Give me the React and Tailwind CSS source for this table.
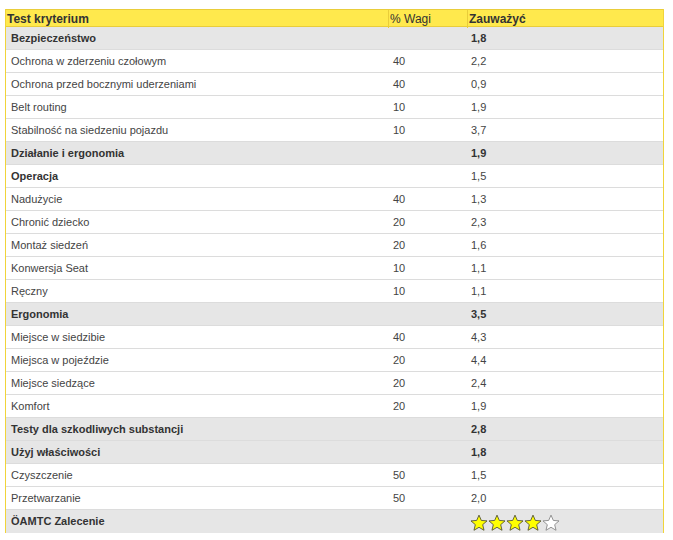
import React from "react";

const rows = [
  { name: "Bezpieczeństwo", weight: "", score: "1,8", type: "group" },
  { name: "Ochrona w zderzeniu czołowym", weight: "40", score: "2,2" },
  { name: "Ochrona przed bocznymi uderzeniami", weight: "40", score: "0,9" },
  { name: "Belt routing", weight: "10", score: "1,9" },
  { name: "Stabilność na siedzeniu pojazdu", weight: "10", score: "3,7" },
  { name: "Działanie i ergonomia", weight: "", score: "1,9", type: "group" },
  { name: "Operacja", weight: "", score: "1,5", type: "sub" },
  { name: "Nadużycie", weight: "40", score: "1,3" },
  { name: "Chronić dziecko", weight: "20", score: "2,3" },
  { name: "Montaż siedzeń", weight: "20", score: "1,6" },
  { name: "Konwersja Seat", weight: "10", score: "1,1" },
  { name: "Ręczny", weight: "10", score: "1,1" },
  { name: "Ergonomia", weight: "", score: "3,5", type: "group" },
  { name: "Miejsce w siedzibie", weight: "40", score: "4,3" },
  { name: "Miejsca w pojeździe", weight: "20", score: "4,4" },
  { name: "Miejsce siedzące", weight: "20", score: "2,4" },
  { name: "Komfort", weight: "20", score: "1,9" },
  { name: "Testy dla szkodliwych substancji", weight: "", score: "2,8", type: "group" },
  { name: "Użyj właściwości", weight: "", score: "1,8", type: "group" },
  { name: "Czyszczenie", weight: "50", score: "1,5" },
  { name: "Przetwarzanie", weight: "50", score: "2,0" },
];

function Star({ filled }) {
  return (
    <svg width="18" height="18" viewBox="0 0 24 24">
      <path
        d="M12 1.5l3.1 7.1 7.6.6-5.8 5 1.8 7.5L12 17.7l-6.7 4 1.8-7.5-5.8-5 7.6-.6z"
        fill={filled ? "#ffff00" : "#ffffff"}
        stroke={filled ? "#555533" : "#888888"}
        strokeWidth="1.2"
        strokeLinejoin="round"
      />
    </svg>
  );
}

function Row({ row }) {
  const shaded = row.type === "group";
  const bold = row.type === "group";
  return (
    <div
      className={`grid grid-cols-[383px_79px_197px] h-[23px] items-center border-b border-[#dcdcdc] ${
        shaded ? "bg-[#e6e6e6]" : "bg-white"
      } ${bold ? "font-bold text-[#333]" : "text-[#444]"}`}
    >
      <div className={`pl-[5px] ${row.type === "sub" ? "font-bold text-[#333]" : ""}`}>{row.name}</div>
      <div className="pl-[4px]">{row.weight}</div>
      <div className="pl-[3px]">{row.score}</div>
    </div>
  );
}

export default function App() {
  return (
    <div className="bg-white min-h-[540px] pt-[9px] pl-[5px] text-[11px] font-['Liberation_Sans',Arial,sans-serif]">
      <div className="w-[659px] border-l border-r border-[#f0d43a]">
        <div className="grid grid-cols-[383px_79px_197px] h-[18px] items-center bg-[#ffe94d] border-t border-b border-[#e9cd3a] font-bold text-[#333] text-[12px]">
          <div className="pl-[1px] h-full flex items-center border-r border-[#e9cd3a]">Test kryterium</div>
          <div className="pl-[1px] h-full flex items-center border-r border-[#e9cd3a] font-normal">% Wagi</div>
          <div className="pl-[1px] h-full flex items-center">Zauważyć</div>
        </div>
        {rows.map((r, i) => (
          <Row key={i} row={r} />
        ))}
        <div className="grid grid-cols-[383px_79px_197px] h-[23px] items-center bg-[#e6e6e6] font-bold text-[#333]">
          <div className="pl-[5px]">ÖAMTC Zalecenie</div>
          <div></div>
          <div className="flex pl-[2px] pt-[2px]">
            <Star filled />
            <Star filled />
            <Star filled />
            <Star filled />
            <Star />
          </div>
        </div>
      </div>
    </div>
  );
}
